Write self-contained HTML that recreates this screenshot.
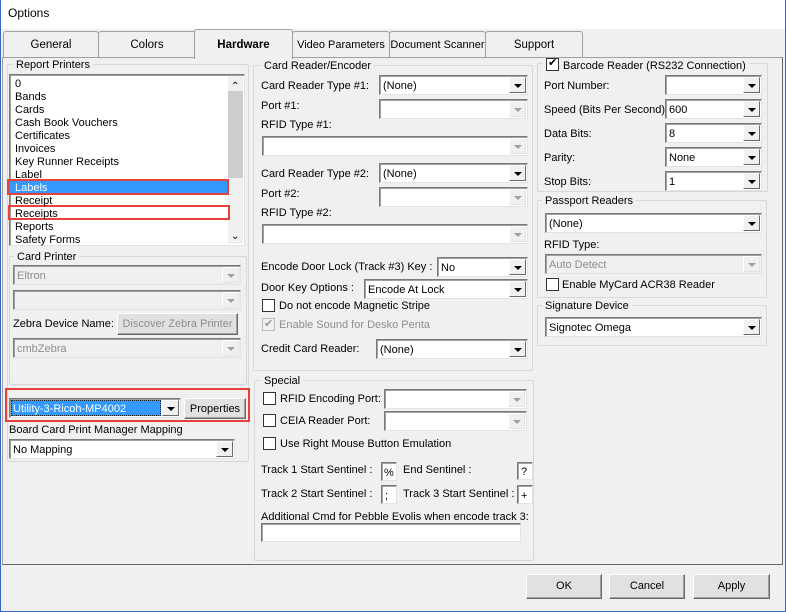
<!DOCTYPE html>
<html><head><style>
*{box-sizing:border-box;margin:0;padding:0}
body{width:786px;height:612px;overflow:hidden;background:#f0f0f0;font-family:"Liberation Sans",sans-serif;font-size:11px;color:#000;position:relative}
div,span{position:absolute}
.win{left:0;top:0;width:786px;height:612px;border:1px solid #3a66c8;border-top:none}
.title{left:0;top:0;width:786px;height:29px;background:#fff}
.t{white-space:nowrap;line-height:13px;margin-top:1px}
.g{border:1px solid #d8d8d8;border-radius:2px}
.gl{background:#f0f0f0;padding:0 3px;white-space:nowrap;line-height:13px;margin-top:1px}
.cb{background:#fff;border:1px solid #7a7a7a;border-right-color:#e3e3e3;border-bottom-color:#e3e3e3;box-shadow:inset 1px 1px 0 #a0a0a0;height:20px;overflow:hidden}
.cb .v{left:3px;top:4px;white-space:nowrap;line-height:13px}
.cb .a{right:1px;top:1px;width:17px;height:16px;background:#f0f0f0;border:1px solid;border-color:#fff #696969 #696969 #fff}
.cb .a:after{content:"";position:absolute;left:4px;top:6px;border-left:4px solid transparent;border-right:4px solid transparent;border-top:4px solid #000}
.cb.d{background:#f0f0f0}
.cb.d .v{color:#8d8d8d}
.cb.d .a{border-color:#fff #e3e3e3 #e3e3e3 #fff}
.cb.d .a:after{border-top-color:#a0a0a0}
.btn{background:#e1e1e1;border:1px solid;border-color:#fff #696969 #696969 #fff;box-shadow:inset -1px -1px 0 #a0a0a0;text-align:center;line-height:20px;white-space:nowrap}
.chk{width:13px;height:13px;background:#fff;border:1px solid #333}
.tab{height:26px;background:#f0f0f0;border:1px solid #a0a0a0;border-bottom:none;border-radius:3px 3px 0 0;text-align:center;line-height:26px;font-size:11.5px;white-space:nowrap;overflow:hidden}
.tb{background:#fff;border:1px solid #7a7a7a;border-right-color:#e3e3e3;border-bottom-color:#e3e3e3;box-shadow:inset 1px 1px 0 #a0a0a0}
</style></head><body>
<div class="title"></div>
<div class="t" style="left:8px;top:6px;font-size:12px">Options</div>
<div class="win"></div>

<div style="left:2px;top:57px;width:781px;height:508px;border:1px solid #a0a0a0;border-right-color:#696969;border-bottom-color:#696969"></div>
<div class="tab" style="left:3px;top:31px;width:96px">General</div>
<div class="tab" style="left:98px;top:31px;width:98px">Colors</div>
<div class="tab" style="left:292px;top:31px;width:98px;font-size:11px">Video Parameters</div>
<div class="tab" style="left:389px;top:31px;width:97px;font-size:11px">Document Scanner</div>
<div class="tab" style="left:485px;top:31px;width:98px">Support</div>
<div class="tab" style="left:194px;top:29px;width:99px;height:30px;font-weight:bold;line-height:30px">Hardware</div>

<div class="g" style="left:7px;top:64px;width:242px;height:398px"></div>
<div class="gl" style="left:13px;top:58px">Report Printers</div>
<div class="tb" style="left:9px;top:74px;width:236px;height:172px"></div>
<div style="left:228px;top:76px;width:15px;height:168px;background:#f0f0f0"></div>
<div style="left:228px;top:91px;width:15px;height:87px;background:#cdcdcd"></div>
<div class="t" style="left:231px;top:79px;font-size:10px">&#8963;</div>
<div class="t" style="left:231px;top:229px;font-size:10px">&#8964;</div>
<div style="left:10px;top:180px;width:218px;height:13px;background:#3399ff"></div>
<div style="left:7px;top:179px;width:222px;height:16px;border:2px solid #e8403a"></div>
<div style="left:8px;top:205px;width:222px;height:15px;border:2px solid #e8403a"></div>
<div class="t" style="left:15px;top:77px;line-height:13px">0<br>Bands<br>Cards<br>Cash Book Vouchers<br>Certificates<br>Invoices<br>Key Runner Receipts<br>Label<br><span style="position:static;color:#fff">Labels</span><br>Receipt<br>Receipts<br>Reports<br>Safety Forms</div>

<div class="g" style="left:9px;top:256px;width:238px;height:129px"></div>
<div class="gl" style="left:14px;top:250px">Card Printer</div>
<div class="cb d" style="left:13px;top:265px;width:228px"><div class="v">Eltron</div><div class="a"></div></div>
<div class="cb d" style="left:13px;top:290px;width:228px"><div class="a"></div></div>
<div class="t" style="left:13px;top:317px">Zebra Device Name:</div>
<div class="btn" style="left:117px;top:313px;width:121px;color:#8d8d8d">Discover Zebra Printer</div>
<div class="cb d" style="left:13px;top:338px;width:228px"><div class="v">cmbZebra</div><div class="a"></div></div>

<div style="left:5px;top:388px;width:245px;height:34px;border:2px solid #e8403a"></div>
<div class="cb" style="left:9px;top:398px;width:172px"><div style="left:1px;top:1px;width:150px;height:16px;background:#3399ff;border:1px dotted #222"></div><div class="v" style="color:#fff">Utility-3-Ricoh-MP4002</div><div class="a"></div></div>
<div class="btn" style="left:184px;top:398px;width:62px;height:21px">Properties</div>
<div class="t" style="left:9px;top:423px">Board Card Print Manager Mapping</div>
<div class="cb" style="left:9px;top:439px;width:226px"><div class="v">No Mapping</div><div class="a"></div></div>

<div class="g" style="left:253px;top:65px;width:280px;height:306px"></div>
<div class="gl" style="left:261px;top:59px">Card Reader/Encoder</div>
<div class="t" style="left:261px;top:79px">Card Reader Type #1:</div>
<div class="cb" style="left:379px;top:75px;width:149px"><div class="v">(None)</div><div class="a"></div></div>
<div class="t" style="left:261px;top:99px">Port #1:</div>
<div class="cb d" style="left:379px;top:99px;width:149px;background:#fff"><div class="a"></div></div>
<div class="t" style="left:261px;top:118px">RFID Type #1:</div>
<div class="cb d" style="left:262px;top:136px;width:266px;background:#fff"><div class="a"></div></div>
<div class="t" style="left:261px;top:167px">Card Reader Type #2:</div>
<div class="cb" style="left:379px;top:163px;width:149px"><div class="v">(None)</div><div class="a"></div></div>
<div class="t" style="left:261px;top:187px">Port #2:</div>
<div class="cb d" style="left:379px;top:187px;width:149px;background:#fff"><div class="a"></div></div>
<div class="t" style="left:261px;top:206px">RFID Type #2:</div>
<div class="cb d" style="left:262px;top:224px;width:266px;background:#fff"><div class="a"></div></div>
<div class="t" style="left:261px;top:260px">Encode Door Lock (Track #3) Key :</div>
<div class="cb" style="left:437px;top:257px;width:91px"><div class="v">No</div><div class="a"></div></div>
<div class="t" style="left:261px;top:281px">Door Key Options :</div>
<div class="cb" style="left:364px;top:279px;width:164px"><div class="v">Encode At Lock</div><div class="a"></div></div>
<div class="chk" style="left:262px;top:299px"></div>
<div class="t" style="left:279px;top:299px">Do not encode Magnetic Stripe</div>
<div class="chk" style="left:262px;top:318px;border-color:#bcbcbc;background:#f0f0f0"><span style="left:1px;top:-2px;font-size:11px;color:#999">&#10004;</span></div>
<div class="t" style="left:279px;top:318px;color:#8d8d8d">Enable Sound for Desko Penta</div>
<div class="t" style="left:261px;top:342px">Credit Card Reader:</div>
<div class="cb" style="left:376px;top:339px;width:152px"><div class="v">(None)</div><div class="a"></div></div>

<div class="g" style="left:254px;top:380px;width:280px;height:181px"></div>
<div class="gl" style="left:261px;top:374px">Special</div>
<div class="chk" style="left:263px;top:392px"></div>
<div class="t" style="left:280px;top:392px">RFID Encoding Port:</div>
<div class="cb d" style="left:384px;top:389px;width:143px;background:#fff"><div class="a"></div></div>
<div class="chk" style="left:263px;top:414px"></div>
<div class="t" style="left:280px;top:414px">CEIA Reader Port:</div>
<div class="cb d" style="left:384px;top:411px;width:143px;background:#fff"><div class="a"></div></div>
<div class="chk" style="left:263px;top:437px"></div>
<div class="t" style="left:280px;top:437px">Use Right Mouse Button Emulation</div>
<div class="t" style="left:261px;top:463px">Track 1 Start Sentinel :</div>
<div class="tb" style="left:381px;top:462px;width:16px;height:19px"><span style="left:2px;top:4px">%</span></div>
<div class="t" style="left:403px;top:463px">End Sentinel :</div>
<div class="tb" style="left:517px;top:462px;width:16px;height:18px"><span style="left:3px;top:3px">?</span></div>
<div class="t" style="left:261px;top:487px">Track 2 Start Sentinel :</div>
<div class="tb" style="left:381px;top:485px;width:16px;height:19px"><span style="left:3px;top:4px">;</span></div>
<div class="t" style="left:403px;top:487px">Track 3 Start Sentinel :</div>
<div class="tb" style="left:517px;top:485px;width:16px;height:19px"><span style="left:3px;top:4px">+</span></div>
<div class="t" style="left:261px;top:510px">Additional Cmd for Pebble Evolis when encode track 3:</div>
<div class="tb" style="left:261px;top:523px;width:260px;height:19px"></div>

<div class="g" style="left:537px;top:63px;width:231px;height:129px"></div>
<div class="gl" style="left:543px;top:57px;padding-left:3px"><span style="position:relative;display:inline-block;width:13px;height:13px;background:#fff;border:1px solid #333;vertical-align:-2px;margin-right:4px"><span style="left:1px;top:-2px;font-size:11px">&#10004;</span></span>Barcode Reader (RS232 Connection)</div>
<div class="t" style="left:544px;top:79px">Port Number:</div>
<div class="cb" style="left:665px;top:75px;width:97px"><div class="a"></div></div>
<div class="t" style="left:544px;top:103px">Speed (Bits Per Second):</div>
<div class="cb" style="left:665px;top:99px;width:97px"><div class="v">600</div><div class="a"></div></div>
<div class="t" style="left:544px;top:127px">Data Bits:</div>
<div class="cb" style="left:665px;top:123px;width:97px"><div class="v">8</div><div class="a"></div></div>
<div class="t" style="left:544px;top:151px">Parity:</div>
<div class="cb" style="left:665px;top:147px;width:97px"><div class="v">None</div><div class="a"></div></div>
<div class="t" style="left:544px;top:175px">Stop Bits:</div>
<div class="cb" style="left:665px;top:171px;width:97px"><div class="v">1</div><div class="a"></div></div>

<div class="g" style="left:537px;top:200px;width:230px;height:98px"></div>
<div class="gl" style="left:542px;top:194px">Passport Readers</div>
<div class="cb" style="left:545px;top:213px;width:217px"><div class="v">(None)</div><div class="a"></div></div>
<div class="t" style="left:544px;top:238px">RFID Type:</div>
<div class="cb d" style="left:545px;top:254px;width:217px"><div class="v">Auto Detect</div><div class="a"></div></div>
<div class="chk" style="left:546px;top:278px"></div>
<div class="t" style="left:562px;top:278px">Enable MyCard ACR38 Reader</div>

<div class="g" style="left:537px;top:305px;width:230px;height:41px"></div>
<div class="gl" style="left:542px;top:299px">Signature Device</div>
<div class="cb" style="left:545px;top:317px;width:217px"><div class="v">Signotec Omega</div><div class="a"></div></div>

<div class="btn" style="left:526px;top:574px;width:76px;height:25px;line-height:23px">OK</div>
<div class="btn" style="left:609px;top:574px;width:76px;height:25px;line-height:23px">Cancel</div>
<div class="btn" style="left:693px;top:574px;width:77px;height:25px;line-height:23px">Apply</div>
</body></html>
